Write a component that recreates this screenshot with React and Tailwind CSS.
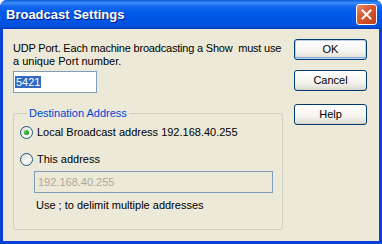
const font = { fontFamily: '"Liberation Sans", Arial, sans-serif' };

function Radio({ checked }) {
  return (
    <svg width="13" height="13" viewBox="0 0 13 13" className="shrink-0">
      <defs>
        <linearGradient id={checked ? "rg1" : "rg2"} x1="0" y1="0" x2="1" y2="1">
          <stop offset="0" stopColor="#DCD9D0" />
          <stop offset="0.5" stopColor="#F4F3EE" />
          <stop offset="1" stopColor="#FFFFFF" />
        </linearGradient>
        <radialGradient id={checked ? "dot1" : "dot2"} cx="0.4" cy="0.4" r="0.6">
          <stop offset="0" stopColor="#55D451" />
          <stop offset="1" stopColor="#1A9414" />
        </radialGradient>
      </defs>
      <circle cx="6.5" cy="6.5" r="6" fill={`url(#${checked ? "rg1" : "rg2"})`} stroke="#1C5180" strokeWidth="1" />
      {checked && <circle cx="6.5" cy="6.5" r="2.5" fill="url(#dot1)" />}
    </svg>
  );
}

function XpButton({ label, isDefault }) {
  return (
    <button
      className={`w-[73px] h-[21px] rounded-[3px] border border-[#003C74] bg-[linear-gradient(to_bottom,#FFFFFF_0%,#F4F3EE_60%,#E3E1D6_90%,#D6D0C5_100%)] text-[11px] text-black leading-none ${
        isDefault ? "shadow-[inset_0_0_0_1px_#B9D1EA,inset_0_-1px_0_1px_#89ADE4]" : ""
      }`}
      style={font}
    >
      {label}
    </button>
  );
}

export default function App() {
  return (
    <div className="w-[382px] h-[244px] flex flex-col bg-[#0A3FD8] rounded-t-[7px] overflow-hidden" style={font}>
      {/* title bar */}
      <div className="h-[29px] shrink-0 flex items-center justify-between pl-[6px] pr-[5px] bg-[linear-gradient(to_bottom,#0A5BE0_0%,#3D8EF7_10%,#1368EE_22%,#0058EA_45%,#0054E3_75%,#0050DC_90%,#003DBE_100%)]">
        <span className="text-white font-bold text-[13px] [text-shadow:1px_1px_0_#0A1E88] pt-[1px]">
          Broadcast Settings
        </span>
        <div className="w-[21px] h-[21px] rounded-[3px] border border-white bg-[linear-gradient(135deg,#E9896A_0%,#D8572E_45%,#C13E18_100%)] flex items-center justify-center">
          <svg width="11" height="11" viewBox="0 0 11 11">
            <path d="M1.5 1.5 L9.5 9.5 M9.5 1.5 L1.5 9.5" stroke="white" strokeWidth="2" strokeLinecap="square" />
          </svg>
        </div>
      </div>

      {/* client */}
      <div className="flex-1 mx-[3px] mb-[3px] bg-[#ECE9D8] flex">
        <div className="w-[280px] pl-[10px] pt-[13px] flex flex-col">
          <div className="text-[11px] leading-[13px] text-black whitespace-nowrap">
            <div className="tracking-[-0.2px]">UDP Port. Each machine broadcasting a Show{"\u00a0"} must use</div>
            <div>a unique Port number.</div>
          </div>
          <div className="mt-[3px] w-[84px] h-[22px] border border-[#7F9DB9] bg-white flex items-center pl-[1px]">
            <span className="bg-[#316AC5] text-white text-[11px] leading-[12px] px-[1px]">5421</span>
          </div>

          <fieldset className="mt-[14px] w-[270px] h-[123px] border border-[#D0D0BF] rounded-[3px] pl-[6px] pr-[9px]">
            <legend className="ml-[7px] px-[2px] text-[11px] leading-[13px] text-[#0046D5]">Destination Address</legend>
            <div className="mt-[6px] h-[13px] flex items-center gap-[4px]">
              <Radio checked />
              <span className="text-[11px] leading-[13px] text-black">Local Broadcast address 192.168.40.255</span>
            </div>
            <div className="mt-[14px] h-[13px] flex items-center gap-[4px]">
              <Radio />
              <span className="text-[11px] leading-[13px] text-black">This address</span>
            </div>
            <div className="mt-[5px] ml-[14px] w-[239px] h-[22px] border border-[#7F9DB9] bg-[#ECE9D8] flex items-center pl-[3px]">
              <span className="text-[11px] text-[#ACA899]">192.168.40.255</span>
            </div>
            <div className="mt-[6px] ml-[16px] text-[11px] leading-[13px] text-black">
              Use ; to delimit multiple addresses
            </div>
          </fieldset>
        </div>

        <div className="ml-[11px] pt-[10px] flex flex-col">
          <XpButton label="OK" isDefault />
          <div className="mt-[7px]">
            <XpButton label="Cancel" />
          </div>
          <div className="mt-[10px]">
            <XpButton label="Help" />
          </div>
        </div>
      </div>
    </div>
  );
}
